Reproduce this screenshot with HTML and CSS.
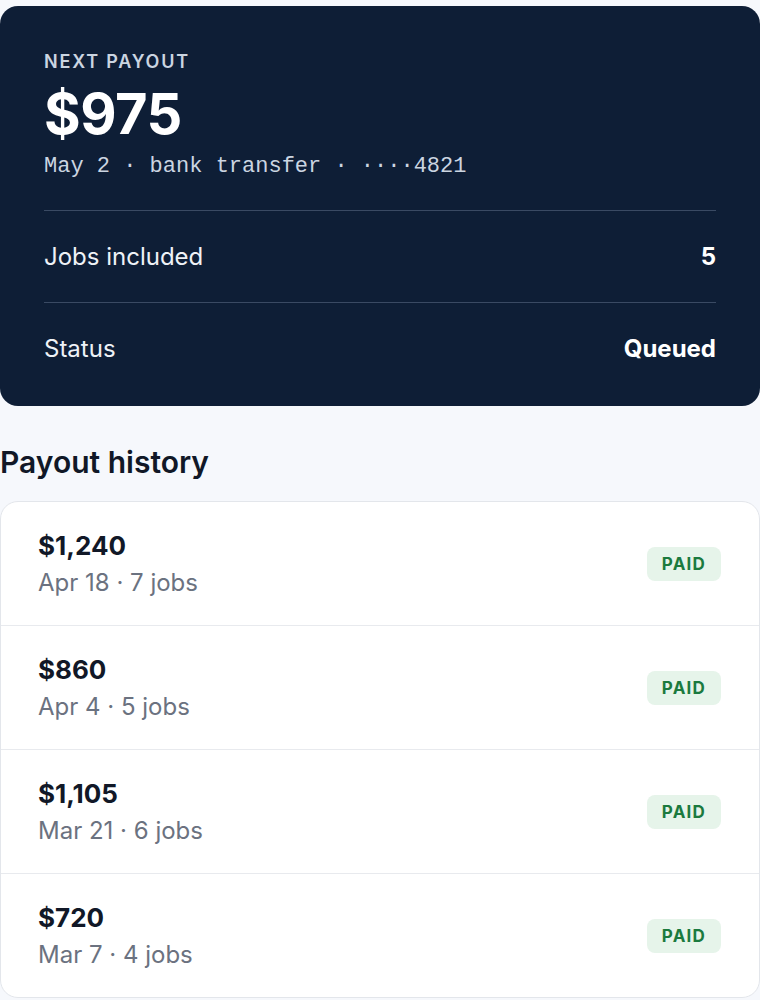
FILE: index.html
```html
<!doctype html>
<html lang="en">
<head>
    <meta charset="UTF-8">
    <meta name="viewport" content="width=device-width, initial-scale=1.0">
    <title>Payouts</title>
    <link rel="stylesheet" href="styles.css">
</head>
<body>

<div class="page">
    <section class="next-card">
        <div class="next-label">NEXT PAYOUT</div>
        <div class="next-amount">$975</div>
        <div class="next-meta">May 2 · bank transfer · ····4821</div>

        <div class="next-row">
            <span>Jobs included</span>
            <b>5</b>
        </div>
        <div class="next-row">
            <span>Status</span>
            <b>Queued</b>
        </div>
    </section>

    <h2 class="section-title">Payout history</h2>

    <div class="history">
        <div class="history-row">
            <div>
                <div class="amount">$1,240</div>
                <div class="sub">Apr 18 · 7 jobs</div>
            </div>
            <span class="badge">PAID</span>
        </div>
        <div class="history-row">
            <div>
                <div class="amount">$860</div>
                <div class="sub">Apr 4 · 5 jobs</div>
            </div>
            <span class="badge">PAID</span>
        </div>
        <div class="history-row">
            <div>
                <div class="amount">$1,105</div>
                <div class="sub">Mar 21 · 6 jobs</div>
            </div>
            <span class="badge">PAID</span>
        </div>
        <div class="history-row">
            <div>
                <div class="amount">$720</div>
                <div class="sub">Mar 7 · 4 jobs</div>
            </div>
            <span class="badge">PAID</span>
        </div>
    </div>
</div>

</body>
</html>
```

FILE: styles.css
```css
body {
    margin: 0;
    background: #f6f8fc;
    font-family: Inter, "Noto Sans", sans-serif;
    color: #111827;
}

.page {
    padding-top: 6px;
}

.next-card {
    background: #0e1e36;
    border-radius: 18px;
    padding: 45px 44px 12px;
    color: #fff;
}

.next-label {
    font-size: 18px;
    line-height: 1.2;
    font-weight: 600;
    letter-spacing: 1.8px;
    color: #cbd5e1;
}

.next-amount {
    margin-top: 11px;
    font-size: 56px;
    line-height: 1.1;
    font-weight: 700;
    letter-spacing: -0.5px;
}

.next-meta {
    margin-top: 8px;
    margin-bottom: 28px;
    font-family: "Liberation Mono", monospace;
    font-size: 22px;
    line-height: 1.3;
    color: #cbd5e1;
}

.next-row {
    display: flex;
    justify-content: space-between;
    align-items: center;
    height: 91px;
    border-top: 1px solid #3a4a63;
    font-size: 24px;
    color: #eef2f7;
}

.next-row b {
    font-weight: 700;
    color: #fff;
}

.section-title {
    margin: 38px 0 21px;
    font-size: 30px;
    line-height: 1.2;
    font-weight: 600;
}

.history {
    background: #fff;
    border: 1px solid #e3e6eb;
    border-radius: 18px;
}

.history-row {
    display: flex;
    justify-content: space-between;
    align-items: center;
    padding: 28px 38px 27px 37px;
    border-top: 1px solid #e8eaee;
}

.history-row:first-child {
    border-top: 0;
}

.amount {
    font-size: 26px;
    line-height: 32px;
    font-weight: 700;
    margin-bottom: 5px;
}

.sub {
    font-size: 24px;
    line-height: 31px;
    color: #6b7280;
}

.badge {
    display: inline-block;
    padding: 7px 15px;
    border-radius: 8px;
    background: #e6f4ea;
    color: #1b7a3e;
    font-size: 17px;
    line-height: 20px;
    font-weight: 700;
    letter-spacing: 1.2px;
}
```
